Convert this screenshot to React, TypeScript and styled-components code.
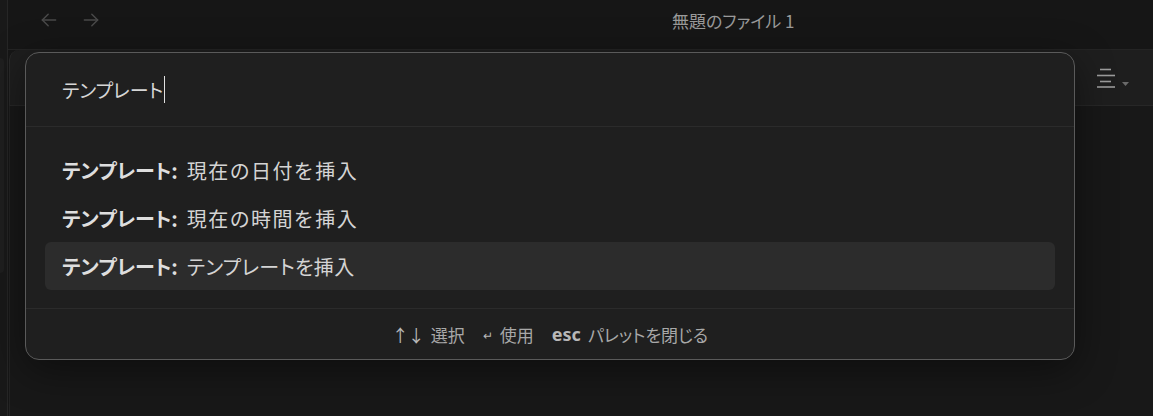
import React from "react";
import styled, { createGlobalStyle } from "styled-components";

const Global = createGlobalStyle`
  html, body { margin: 0; padding: 0; background: #161616; }
  body { width: 1153px; height: 416px; overflow: hidden; font-family: "Noto Sans CJK JP", "Noto Sans", sans-serif; }
  #root { height: 416px; }
`;

const Workspace = styled.div`
  position: relative;
  display: flex;
  width: 1153px;
  height: 416px;
  background: #161616;
  overflow: hidden;
`;

const Ribbon = styled.div`
  width: 8px;
  flex: none;
  display: flex;
  flex-direction: column;
  border-right: 1px solid #262626;
  background: #191919;
  padding-top: 58px;
  box-sizing: border-box;
`;

const RibbonPanel = styled.div`
  width: 4px;
  height: 215px;
  background: #1f1f1f;
  border-radius: 0 4px 4px 0;
`;

const Main = styled.div`
  flex: 1;
  display: flex;
  flex-direction: column;
`;

const TitleBar = styled.div`
  height: 50px;
  flex: none;
  display: flex;
  align-items: center;
  padding-left: 30px;
  padding-bottom: 9px;
  border-bottom: 1px solid #242424;
  box-sizing: border-box;
  background: #161616;
`;

const NavButton = styled.div`
  width: 22px;
  height: 22px;
  display: flex;
  align-items: center;
  justify-content: center;
  color: #4a4a4a;
  margin-right: 20px;
`;

const Title = styled.div`
  margin-left: 550px;
  font-size: 17px;
  color: #9a9a9a;
  font-feature-settings: "palt";
`;

const Body = styled.div`
  flex: 1;
  display: flex;
  flex-direction: column;
  padding-left: 1px;
`;

const TabHeader = styled.div`
  height: 56px;
  flex: none;
  background: #1e1e1e;
  border-top-left-radius: 10px;
  border-left: 1px solid #2a2a2a;
  border-bottom: 1px solid #272727;
  box-sizing: border-box;
  display: flex;
  align-items: center;
  justify-content: flex-end;
  padding-right: 24px;
  gap: 5px;
`;

const Content = styled.div`
  flex: 1;
  background: #181818;
  border-left: 1px solid #232323;
`;

const Modal = styled.div`
  position: absolute;
  left: 25px;
  top: 52px;
  width: 1050px;
  height: 308px;
  box-sizing: border-box;
  background: #1f1f1f;
  border: 1px solid #5a5a5a;
  border-radius: 14px;
  box-shadow: 0 10px 40px rgba(0, 0, 0, 0.45);
  display: flex;
  flex-direction: column;
  overflow: hidden;
`;

const InputRow = styled.div`
  height: 73px;
  flex: none;
  display: flex;
  align-items: center;
  padding-left: 36px;
  border-bottom: 1px solid #2b2b2b;
  font-size: 19px;
  color: #d6d6d6;
  font-feature-settings: "palt";
`;

const Caret = styled.span`
  display: inline-block;
  width: 1px;
  height: 27px;
  background: #e0e0e0;
  margin-left: 1px;
`;

const List = styled.div`
  flex: none;
  height: 182px;
  box-sizing: border-box;
  padding: 19px 19px;
  display: flex;
  flex-direction: column;
  border-bottom: 1px solid #2b2b2b;
`;

const Item = styled.div<{ $selected?: boolean }>`
  height: 48px;
  flex: none;
  display: flex;
  align-items: center;
  padding-left: 17px;
  border-radius: 6px;
  background: ${(p) => (p.$selected ? "#2c2c2c" : "transparent")};
  font-size: 20px;
  color: #d4d4d4;
  white-space: pre;
`;

const Prefix = styled.span`
  font-weight: 700;
  color: #dedede;
  font-feature-settings: "palt";
`;

const Rest = styled.span<{ $palt?: boolean }>`
  margin-left: 9px;
  letter-spacing: ${(p) => (p.$palt ? "0.3px" : "1.4px")};
  font-feature-settings: ${(p) => (p.$palt ? '"palt"' : "normal")};
`;

const Footer = styled.div`
  flex: 1;
  display: flex;
  align-items: center;
  justify-content: center;
  gap: 18px;
  font-size: 17px;
  color: #a8a8a8;
`;

const Hint = styled.div`
  display: flex;
  align-items: center;
  gap: 7px;
  font-feature-settings: "palt";
`;

const Key = styled.span<{ $small?: boolean; $bold?: boolean }>`
  font-size: ${(p) => (p.$small ? "12px" : p.$bold ? "18px" : "17px")};
  font-weight: ${(p) => (p.$bold ? 700 : 400)};
  letter-spacing: ${(p) => (p.$small || p.$bold ? "0" : "-1px")};
  color: #b8b8b8;
  font-family: ${(p) => (p.$bold ? '"Noto Sans", sans-serif' : "inherit")};
`;

const Arrow = ({ dir }: { dir: "left" | "right" }) => (
  <svg width="20" height="20" viewBox="0 0 24 24" fill="none" stroke="currentColor" strokeWidth="1.7" strokeLinecap="round" strokeLinejoin="round">
    {dir === "left" ? (
      <>
        <path d="M20 12H4" />
        <path d="M11 19l-7-7 7-7" />
      </>
    ) : (
      <>
        <path d="M4 12h16" />
        <path d="M13 5l7 7-7 7" />
      </>
    )}
  </svg>
);

const AlignIcon = () => (
  <svg width="22" height="20" viewBox="0 0 22 20" fill="none" stroke="#9c9c9c" strokeWidth="1.6">
    <path d="M5 1.5h11" />
    <path d="M2 7.5h18" />
    <path d="M5 13.5h11" />
    <path d="M2 19h18" />
  </svg>
);

const Caret2 = () => (
  <svg width="7" height="5" viewBox="0 0 7 5" style={{ marginTop: 14 }}>
    <path d="M0 0h7L3.5 4z" fill="#6a6a6a" />
  </svg>
);

const items = [
  { rest: "現在の日付を挿入", palt: false },
  { rest: "現在の時間を挿入", palt: false },
  { rest: "テンプレートを挿入", palt: true, selected: true },
];

export default function App() {
  return (
    <>
      <Global />
      <Workspace>
        <Ribbon>
          <RibbonPanel />
        </Ribbon>
        <Main>
          <TitleBar>
            <NavButton>
              <Arrow dir="left" />
            </NavButton>
            <NavButton>
              <Arrow dir="right" />
            </NavButton>
            <Title>無題のファイル 1</Title>
          </TitleBar>
          <Body>
            <TabHeader>
              <AlignIcon />
              <Caret2 />
            </TabHeader>
            <Content />
          </Body>
        </Main>
        <Modal>
          <InputRow>
            テンプレート
            <Caret />
          </InputRow>
          <List>
            {items.map((it, i) => (
              <Item key={i} $selected={it.selected}>
                <Prefix>テンプレート:</Prefix>
                <Rest $palt={it.palt}>{it.rest}</Rest>
              </Item>
            ))}
          </List>
          <Footer>
            <Hint>
              <Key>↑↓</Key>
              <span>選択</span>
            </Hint>
            <Hint>
              <Key $small>↵</Key>
              <span>使用</span>
            </Hint>
            <Hint>
              <Key $bold>esc</Key>
              <span>パレットを閉じる</span>
            </Hint>
          </Footer>
        </Modal>
      </Workspace>
    </>
  );
}
